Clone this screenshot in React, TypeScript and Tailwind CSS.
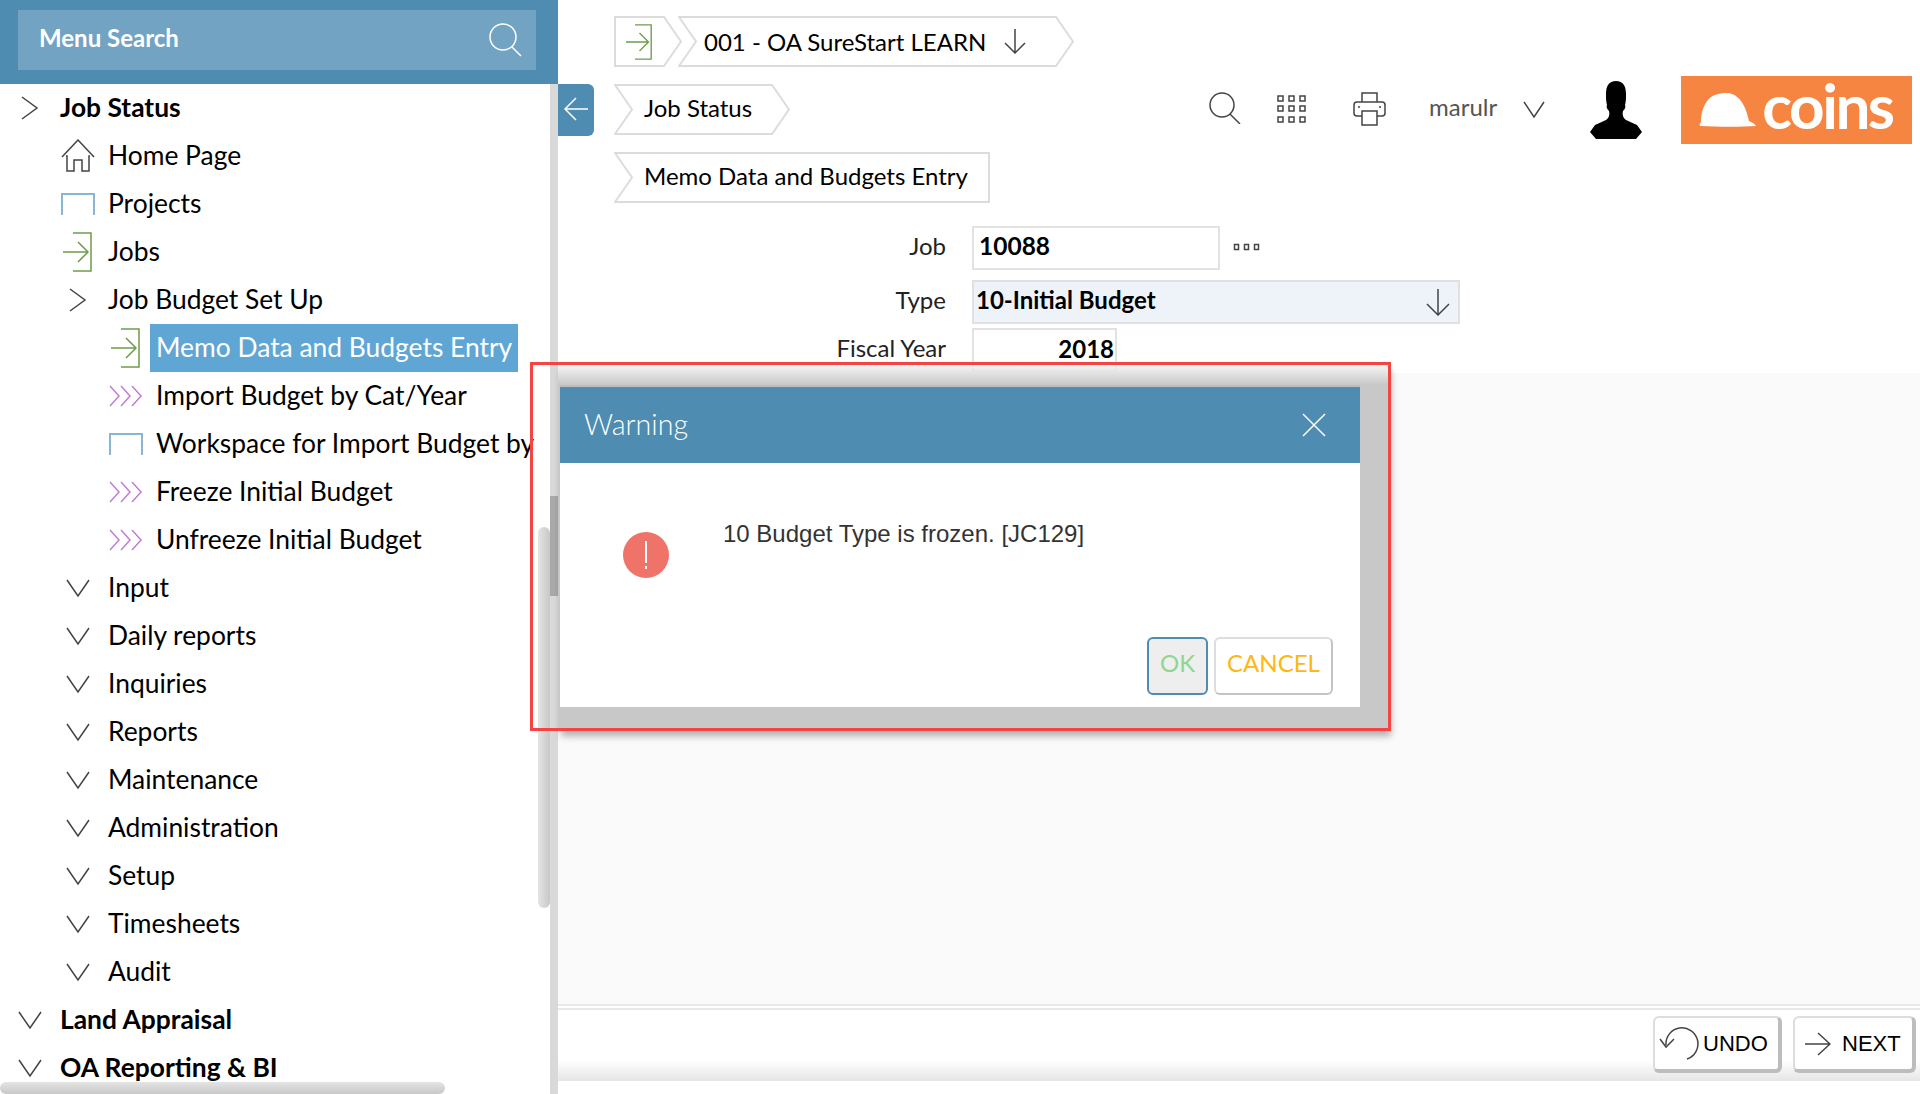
import type { ReactNode } from 'react';

type IconKind = 'right' | 'down' | 'home' | 'box' | 'enter' | 'run';

interface MenuRow {
  label: string;
  level: 0 | 1 | 2;
  icon: IconKind;
  active?: boolean;
}

const menu: MenuRow[] = [
  { label: 'Job Status', level: 0, icon: 'right' },
  { label: 'Home Page', level: 1, icon: 'home' },
  { label: 'Projects', level: 1, icon: 'box' },
  { label: 'Jobs', level: 1, icon: 'enter' },
  { label: 'Job Budget Set Up', level: 1, icon: 'right' },
  { label: 'Memo Data and Budgets Entry', level: 2, icon: 'enter', active: true },
  { label: 'Import Budget by Cat/Year', level: 2, icon: 'run' },
  { label: 'Workspace for Import Budget by', level: 2, icon: 'box' },
  { label: 'Freeze Initial Budget', level: 2, icon: 'run' },
  { label: 'Unfreeze Initial Budget', level: 2, icon: 'run' },
  { label: 'Input', level: 1, icon: 'down' },
  { label: 'Daily reports', level: 1, icon: 'down' },
  { label: 'Inquiries', level: 1, icon: 'down' },
  { label: 'Reports', level: 1, icon: 'down' },
  { label: 'Maintenance', level: 1, icon: 'down' },
  { label: 'Administration', level: 1, icon: 'down' },
  { label: 'Setup', level: 1, icon: 'down' },
  { label: 'Timesheets', level: 1, icon: 'down' },
  { label: 'Audit', level: 1, icon: 'down' },
  { label: 'Land Appraisal', level: 0, icon: 'down' },
  { label: 'OA Reporting & BI', level: 0, icon: 'down' },
];

const levelPadding = { 0: 'pl-[6px]', 1: 'pl-[54px]', 2: 'pl-[102px]' };

const EnterIcon = ({ className = '' }: { className?: string }) => (
  <svg width="30" height="40" viewBox="0 0 30 40" fill="none" stroke="#6f9c4c" strokeWidth="1.5" className={className}>
    <path d="M10 1h18v38H10" />
    <path d="M0 20h25M15 10l10 10-10 10" />
  </svg>
);

const MenuIcon = ({ kind }: { kind: IconKind }) => {
  if (kind === 'right')
    return (
      <svg width="18" height="24" viewBox="0 0 18 24" fill="none" stroke="#444" strokeWidth="1.5">
        <path d="M1 1l15 11L1 23" />
      </svg>
    );
  if (kind === 'down')
    return (
      <svg width="24" height="18" viewBox="0 0 24 18" fill="none" stroke="#444" strokeWidth="1.5">
        <path d="M1 1l11 16L23 1" />
      </svg>
    );
  if (kind === 'home')
    return (
      <svg width="34" height="34" viewBox="0 0 34 34" fill="none" stroke="#444" strokeWidth="1.5">
        <path d="M1 18L17 1l16 17" />
        <path d="M5 17h1v15h7V21h8v11h7V17h1" />
      </svg>
    );
  if (kind === 'box')
    return (
      <svg width="34" height="22" viewBox="0 0 34 22" fill="none" stroke="#8ab6d6" strokeWidth="2">
        <path d="M1 22V1h32v21" />
      </svg>
    );
  if (kind === 'enter') return <EnterIcon />;
  return (
    <svg width="34" height="22" viewBox="0 0 34 22" fill="none" stroke="#c07ed9" strokeWidth="1.5">
      <path d="M1 1l9 10-9 10M12 1l9 10-9 10M23 1l9 10-9 10" />
    </svg>
  );
};

const Sidebar = () => (
  <aside className="relative flex h-full w-[558px] shrink-0 flex-col">
    <div className="flex h-[84px] shrink-0 items-start bg-[#4e8cb2] pl-[18px] pt-[10px]">
      <div className="flex h-[60px] w-[518px] items-center justify-between bg-[#72a3c2] pl-[21px] pr-[14px]">
        <span className="pb-1 text-[24px] font-bold text-white">Menu Search</span>
        <svg width="33" height="34" viewBox="0 0 33 34" fill="none" stroke="#fff" strokeWidth="1.5">
          <circle cx="14" cy="14" r="13" />
          <path d="M23 24l9 9" />
        </svg>
      </div>
    </div>
    <div className="flex min-h-0 flex-1">
      <nav className="w-[534px] shrink-0 overflow-hidden">
        {menu.map((row) => (
          <div key={row.label} className={`flex h-12 items-center ${levelPadding[row.level]}`}>
            <span className="flex h-12 w-12 shrink-0 items-center justify-center">
              <MenuIcon kind={row.icon} />
            </span>
            <span
              className={`flex h-12 items-center whitespace-nowrap px-1.5 pb-[1px] text-[26.4px] ${
                row.level === 0 ? 'font-bold' : ''
              } ${row.active ? 'bg-[#5fa6d4] text-white' : 'text-black'}`}
            >
              {row.label}
            </span>
          </div>
        ))}
      </nav>
      <div className="w-4 shrink-0" />
      <div className="flex w-2 shrink-0 flex-col bg-[#d9d9d9] pt-[412px]">
        <div className="h-[100px] bg-[#a9a9a9]" />
      </div>
    </div>
    <div className="absolute left-[538px] top-[527px] h-[381px] w-3 rounded-full bg-[linear-gradient(to_right,#e4e4e4,#c8c8c8)]" />
    <div className="absolute bottom-0 left-0 h-3 w-[445px] rounded-full bg-[linear-gradient(to_bottom,#e4e4e4,#c8c8c8)]" />
  </aside>
);

interface CrumbProps {
  width: number;
  boxClass: string;
  notch?: boolean;
  tip?: boolean;
  children: ReactNode;
}

const Crumb = ({ width, boxClass, notch = true, tip = true, children }: CrumbProps) => {
  const right = tip ? width - 18 : width - 1;
  const d = tip
    ? `M1 1H${right}L${width - 1} 25.5 ${right} 50H1`
    : `M1 1H${right}V50H1`;
  return (
    <div className={`relative flex h-[51px] shrink-0 items-center ${boxClass}`}>
      <svg width={width} height="51" viewBox={`0 0 ${width} 51`} fill="none" stroke="#dcdcdc" strokeWidth="2" className="absolute left-0 top-0">
        <path d={notch ? `${d}L18 25.5Z` : `${d}Z`} />
      </svg>
      <span className="relative flex items-center">{children}</span>
    </div>
  );
};

const Toolbar = () => (
  <div className="flex h-[51px] items-center">
    <svg width="32" height="32" viewBox="0 0 32 32" fill="none" stroke="#444" strokeWidth="1.5" className="-mt-[3px] ml-[419px]">
      <circle cx="13" cy="13" r="12" />
      <path d="M21 22l10 10" />
    </svg>
    <svg width="30" height="30" viewBox="0 0 30 30" fill="none" stroke="#444" strokeWidth="1.5" className="-mt-[2px] ml-[35px]">
      <path d="M2 2h5v5H2zM13 2h5v5h-5zM24 2h5v5h-5zM2 12h5v5H2zM13 12h5v5h-5zM24 12h5v5h-5zM2 23h5v5H2zM13 23h5v5h-5zM24 23h5v5h-5z" />
    </svg>
    <svg width="33" height="34" viewBox="0 0 33 34" fill="none" stroke="#444" strokeWidth="1.5" className="-mt-[2px] ml-[47px]">
      <path d="M9 10V1h15v9" />
      <path d="M9 24H4q-3 0-3-3V13q0-3 3-3h25q3 0 3 3v8q0 3-3 3h-5" />
      <path d="M9 19h15v14H9z" />
      <path d="M5 15h2M26 15h2" />
    </svg>
    <span className="ml-[43px] pb-[5px] text-[24px] text-[#555]">marulr</span>
    <svg width="22" height="17" viewBox="0 0 22 17" fill="none" stroke="#444" strokeWidth="1.5" className="ml-[26px]">
      <path d="M1 1l10 15L21 1" />
    </svg>
    <svg width="54" height="60" viewBox="0 0 54 60" fill="#000" className="ml-[44px]">
      <path d="M27 1c7 0 10 5 10 13 0 4 0 8-1 11 1 2 0 4-2 6-1 4 0 7 3 9l11 5 5 7-6 7H7l-6-7 5-7 11-5c3-2 4-5 3-9-2-2-3-4-2-6-1-3-1-7-1-11C17 6 20 1 27 1z" />
    </svg>
    <div className="ml-[38px] flex h-[68px] w-[231px] shrink-0 items-center bg-[#f58540] pl-[18px]">
      <svg width="58" height="34" viewBox="0 0 58 34" fill="#fff">
        <path d="M1 33c-1-1 0-3 1-4 0-8 2-16 7-22C13 2 20 0 27 0c9 0 15 6 19 15 2 5 3 9 4 13 2 1 5 2 7 5-14 1-37 1-56 0z" />
      </svg>
      <span className="ml-[5px] pb-[9px] text-[62px] font-bold leading-none tracking-[-2.5px] text-white">coins</span>
    </div>
  </div>
);

const Field = ({ label, mt, children }: { label: string; mt: string; children: ReactNode }) => (
  <div className={`flex items-center ${mt}`}>
    <span className="w-[332px] shrink-0 pb-[5px] text-right text-[24px] text-[#222]">{label}</span>
    <div className="ml-[26px] flex items-center">{children}</div>
  </div>
);

const Main = () => (
  <main className="flex h-full min-w-0 flex-1 flex-col">
    <div className="h-[373px] shrink-0 pl-[56px] pt-4">
      <div className="flex">
        <Crumb width={68} boxClass="w-[68px]" notch={false}>
          <EnterIcon className="ml-[11px] h-[36px] w-[29px]" />
        </Crumb>
        <Crumb width={396} boxClass="-ml-1 w-[396px] pl-[26px]">
          <span className="text-[24px] text-black">001 - OA SureStart LEARN</span>
          <svg width="22" height="25" viewBox="0 0 22 25" fill="none" stroke="#444" strokeWidth="1.5" className="ml-[18px]">
            <path d="M11 0v24M1 14l10 10 10-10" />
          </svg>
        </Crumb>
      </div>
      <div className="mt-[17px] flex items-center">
        <Crumb width={176} boxClass="w-[176px] pl-[30px]">
          <span className="pb-[4px] text-[24px] text-black">Job Status</span>
        </Crumb>
        <Toolbar />
      </div>
      <div className="mt-[17px]">
        <Crumb width={376} boxClass="w-[376px] pl-[30px]" tip={false}>
          <span className="pb-[4px] text-[24px] text-black">Memo Data and Budgets Entry</span>
        </Crumb>
      </div>
      <Field label="Job" mt="mt-[23px]">
        <div className="flex h-[44px] w-[248px] items-center border-2 border-[#e2e2e2] pb-[3px] pl-[5px] text-[24.5px] font-bold text-black">
          10088
        </div>
        <svg width="28" height="8" viewBox="0 0 28 8" fill="none" stroke="#444" strokeWidth="1.5" className="-mt-[2px] ml-[13px]">
          <path d="M1.5 1.5h4v5h-4zM11.5 1.5h4v5h-4zM21.5 1.5h4v5h-4z" />
        </svg>
      </Field>
      <Field label="Type" mt="mt-[10px]">
        <div className="flex h-[44px] w-[488px] items-center justify-between border-2 border-[#e0e0e0] bg-[#eef3fa] pl-[2px] pr-[8px] text-[24px] font-bold text-black">
          <span className="pb-[5px]">10-Initial Budget</span>
          <svg width="24" height="27" viewBox="0 0 24 27" fill="none" stroke="#444" strokeWidth="1.5">
            <path d="M12 0v26M1 15l11 11 11-11" />
          </svg>
        </div>
      </Field>
      <Field label="Fiscal Year" mt="mt-[4px]">
        <div className="flex h-[44px] w-[145px] items-center justify-end border-2 border-[#e2e2e2] pb-[3px] pr-[1px] text-[24px] font-bold text-black">
          2018
        </div>
      </Field>
    </div>
    <div className="flex-1 bg-[#fafafa]" />
    <div className="h-[4px] shrink-0 border-t-2 border-[#e8e8e8]" />
    <div className="relative h-[86px] shrink-0 border-t-2 border-[#e8e8e8] bg-[linear-gradient(to_bottom,#fff_0%,#fff_60%,#e6e6e6_84%,#fff_84%)]">
      <div className="flex justify-end gap-[11px] pr-1 pt-[6px]">
        <button className="flex h-[57px] w-[129px] items-center rounded-md border-2 border-[#ddd] border-b-[4px] border-r-[4px] border-b-[#bdbdbd] border-r-[#bdbdbd] bg-white pl-1 font-['Liberation_Sans',sans-serif] text-[22px] text-black">
          <svg width="40" height="34" viewBox="0 0 40 34" fill="none" stroke="#444" strokeWidth="1.5">
            <path d="M7 18A16 16 0 1 1 28 32" />
            <path d="M1 12l6 8 8-8" />
          </svg>
          <span className="ml-[4px]">UNDO</span>
        </button>
        <button className="flex h-[57px] w-[123px] items-center rounded-md border-2 border-[#ddd] border-b-[4px] border-r-[4px] border-b-[#bdbdbd] border-r-[#bdbdbd] bg-white pl-[10px] font-['Liberation_Sans',sans-serif] text-[22px] text-black">
          <svg width="26" height="24" viewBox="0 0 26 24" fill="none" stroke="#444" strokeWidth="1.5">
            <path d="M0 12h25M13 1l12 11-12 11" />
          </svg>
          <span className="ml-[11px]">NEXT</span>
        </button>
      </div>
    </div>
  </main>
);

const WarningDialog = () => (
  <>
    <div className="absolute left-[558px] top-[365px] h-[365px] w-[830px] bg-[linear-gradient(to_bottom,#f4f4f4cc_0,#c8c8c8_20px,#c8c8c8_100%)] pl-[2px] pt-[22px] shadow-[3px_6px_7px_rgba(0,0,0,0.3)]">
      <div className="flex h-[320px] w-[800px] flex-col bg-white shadow-[0_-2px_0_#bdbdbd]">
        <div className="flex h-[76px] shrink-0 items-center justify-between bg-[#4e8cb2] pl-6 pr-[34px]">
          <span className="pb-[2px] text-[28.6px] font-light text-white">Warning</span>
          <svg width="24" height="24" viewBox="0 0 24 24" fill="none" stroke="#fff" strokeWidth="1.5">
            <path d="M1 1l22 22M23 1L1 23" />
          </svg>
        </div>
        <div className="flex flex-1 items-start pl-[63px] pt-[69px]">
          <div className="relative flex h-[46px] w-[46px] shrink-0 items-center justify-center rounded-full bg-[#f0736a]">
            <div className="h-[28px] w-[2px] bg-[linear-gradient(to_bottom,#fff_0,#fff_80%,transparent_80%,transparent_88%,#fff_88%)]" />
          </div>
          <p className="-mt-[12px] ml-[54px] font-['Liberation_Sans',sans-serif] text-[24px] leading-[28px] text-[#333]">
            10 Budget Type is frozen. [JC129]
          </p>
        </div>
        <div className="flex justify-end gap-[6px] pb-3 pr-[27px]">
          <button className="flex h-[58px] w-[61px] items-center justify-center rounded-md border-2 border-[#4e8cb2] bg-[#eeeeee] pb-[7px] text-[24px] text-[#8fd68f]">
            OK
          </button>
          <button className="flex h-[58px] w-[119px] items-center justify-center rounded-md border-2 border-[#dddddd] border-b-[#c4c4c4] border-r-[#c4c4c4] bg-white pb-[7px] text-[24px] text-[#fdb813]">
            CANCEL
          </button>
        </div>
      </div>
    </div>
    <div className="absolute left-[530px] top-[362px] h-[369px] w-[861px] border-[3px] border-[#f44444]" />
  </>
);

export default function App() {
  return (
    <div className="relative flex h-[1094px] w-[1920px] overflow-hidden bg-white font-['Lato',sans-serif]">
      <Sidebar />
      <div className="absolute left-[558px] top-[84px] flex h-[52px] w-[36px] items-center justify-center rounded-r-md bg-[#4e8cb2] pb-[2px]">
        <svg width="24" height="24" viewBox="0 0 24 24" fill="none" stroke="#fff" strokeWidth="1.5">
          <path d="M24 12H1M12 1L1 12l11 11" />
        </svg>
      </div>
      <Main />
      <WarningDialog />
    </div>
  );
}
